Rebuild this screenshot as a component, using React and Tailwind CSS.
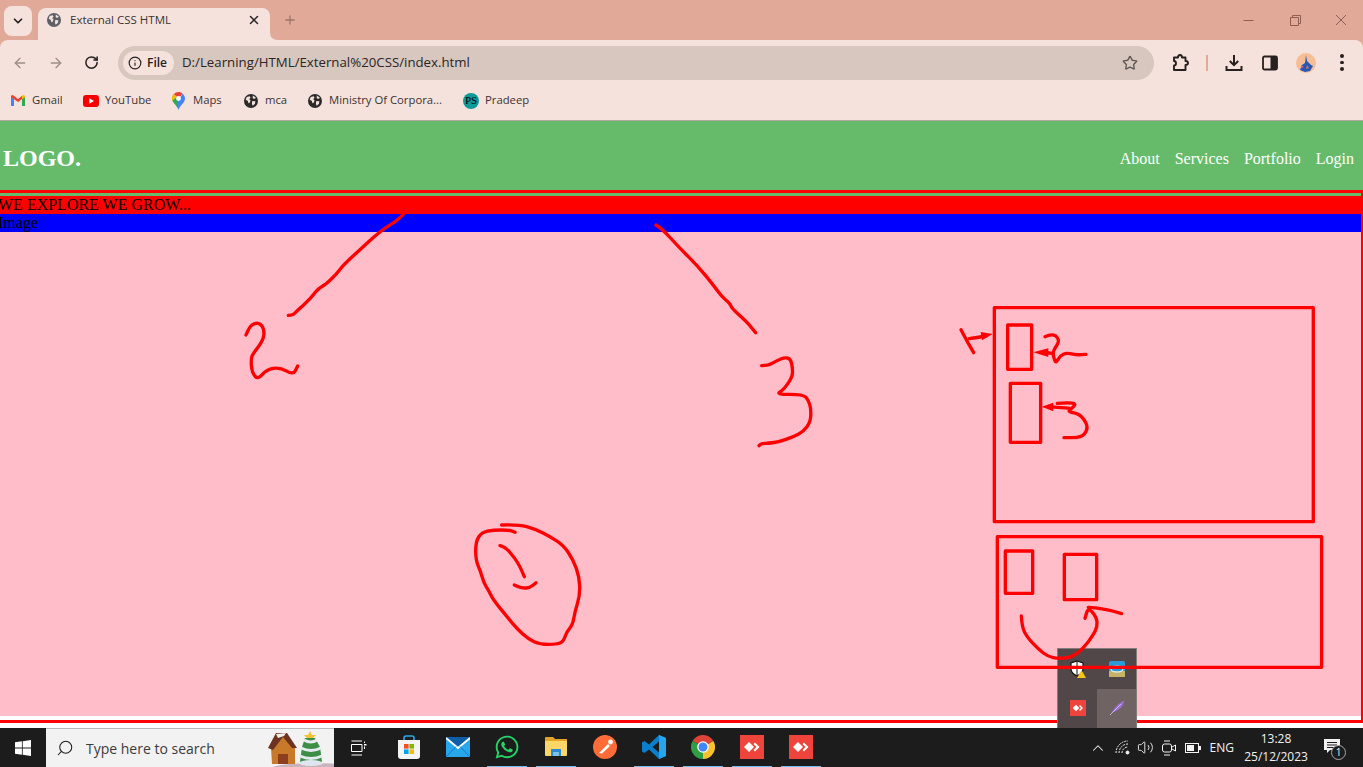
import React from 'react';
import { ArrowLeft, ArrowRight, ChevronDown, ChevronUp, Info, Plus, RotateCw, Search, Star, Volume2, X } from 'lucide-react';
import { FaWhatsapp } from 'react-icons/fa';

const uiFont = "font-['Open_Sans','Noto_Sans',sans-serif]";

const Globe = ({ size = 14, color = '#2b2b2b' }) => (
  <svg width={size} height={size} viewBox="0 0 16 16">
    <circle cx="8" cy="8" r="8" fill={color} />
    <path d="M3 3.5 L6.5 2.5 L7.5 4 L6 6 L7.5 7.5 L6.5 10 L5 10.5 L4.5 8 L2 6.5 Z M10 1.8 L13.5 4 L12.5 5.5 L10 5 Z M9.5 8 L13 8.2 L12.5 11 L10 13.5 L9 11 Z" fill="#f6e2dc" />
  </svg>
);

const GmailIcon = () => (
  <svg width="14" height="11" viewBox="0 0 14 11">
    <path d="M0 1.5 V11 H3 V4 Z" fill="#4285f4" />
    <path d="M14 1.5 V11 H11 V4 Z" fill="#34a853" />
    <path d="M0 1 Q1 -0.5 2.5 0.5 L7 4 L11.5 0.5 L11 4 L7 7 L0 2 Z" fill="#ea4335" />
    <path d="M11 1 L12 0.3 Q13.5 -0.4 14 1.5 V2 L11 4.2 Z" fill="#fbbc04" />
  </svg>
);

const YoutubeIcon = () => (
  <svg width="16" height="12" viewBox="0 0 16 12">
    <rect width="16" height="12" rx="3" fill="#f40000" />
    <path d="M6.3 3.2 L11 6 L6.3 8.8 Z" fill="#fff" />
  </svg>
);

const MapsIcon = () => (
  <svg width="13" height="18" viewBox="0 0 13 18">
    <path d="M6.5 18 C5 13 0 11 0 6.5 C0 4.6 0.8 3 2 2 L6.5 7 Z" fill="#34a853" />
    <path d="M0.4 8.5 C0 7.5 0 7 0 6.5 C0 4.6 0.8 3 2 2 L5 5 Z" fill="#fbbc04" />
    <path d="M2 2 C3 0.8 4.6 0 6.5 0 C8 0 9.6 0.6 10.6 1.7 L6.5 6.5 Z" fill="#ea4335" />
    <path d="M10.6 1.7 C12.2 3 13 4.8 13 6.5 C13 11 8 13 6.5 18 L5 11 Z" fill="#4285f4" />
    <circle cx="6.5" cy="6.5" r="2.4" fill="#fff" />
  </svg>
);

const PsAvatar = () => (
  <span className="flex h-4 w-4 items-center justify-center rounded-full bg-[#0f9a9a] font-['Liberation_Serif',serif] text-[11px] leading-none text-black">PS</span>
);

const bookmarks = [
  { label: 'Gmail', icon: <GmailIcon />, iconW: 'w-[14px]', ml: 'ml-[11px]', gap: 'gap-[7px]', textW: 'w-[33px]' },
  { label: 'YouTube', icon: <YoutubeIcon />, iconW: 'w-4', ml: 'ml-[18px]', gap: 'gap-[6px]', textW: 'w-[46px]' },
  { label: 'Maps', icon: <MapsIcon />, iconW: 'w-[13px]', ml: 'ml-[21px]', gap: 'gap-[8px]', textW: 'w-[30px]' },
  { label: 'mca', icon: <Globe />, iconW: 'w-[14px]', ml: 'ml-[21px]', gap: 'gap-[7px]', textW: 'w-[22px]' },
  { label: 'Ministry Of Corpora...', icon: <Globe />, iconW: 'w-[14px]', ml: 'ml-[21px]', gap: 'gap-[7px]', textW: 'w-[115px]' },
  { label: 'Pradeep', icon: <PsAvatar />, iconW: 'w-4', ml: 'ml-[19px]', gap: 'gap-[6px]', textW: 'w-[44px]' },
];

const TabStrip = () => (
  <div className="flex h-10 items-end bg-[#e1aa98]">
    <div className="mb-1 ml-1 flex h-[30px] w-7 items-center justify-center rounded-lg bg-[#f6e2dc]">
      <ChevronDown size={14} strokeWidth={3} color="#26201f" />
    </div>
    <div className="relative ml-[6px] flex h-8 w-[232px] items-center rounded-t-lg bg-[#f6e2dc] pb-2 pl-[9px] pr-[9px]">
      <svg className="absolute bottom-0 right-[-8px]" width="8" height="8" viewBox="0 0 8 8">
        <path d="M0 0 Q0 8 8 8 H0 Z" fill="#f6e2dc" />
      </svg>
      <Globe size={14} color="#5c5f66" />
      <span className="ml-[9px] flex-1 whitespace-nowrap text-[11.5px] text-[#3a3331]">External CSS HTML</span>
      <X size={14} strokeWidth={2.6} color="#2a2523" />
    </div>
    <div className="mb-[13px] ml-[13px]">
      <Plus size={14} strokeWidth={2.2} color="#9a7468" />
    </div>
    <div className="flex-1" />
    <div className="flex h-full items-center">
      <svg className="mr-[36px]" width="11" height="11" viewBox="0 0 11 11">
        <path d="M0.5 5.5 H10.5" stroke="#8f5f52" fill="none" />
      </svg>
      <svg className="mr-[34px]" width="11" height="11" viewBox="0 0 11 11">
        <path d="M0.5 2.5 H8.5 V10.5 H0.5 Z M2.5 2.5 V0.5 H10.5 V8.5 H8.5" stroke="#8f5f52" fill="none" />
      </svg>
      <svg className="mr-[16px]" width="12" height="12" viewBox="0 0 12 12">
        <path d="M1 1 L11 11 M11 1 L1 11" stroke="#8f5f52" fill="none" />
      </svg>
    </div>
  </div>
);

const Toolbar = () => (
  <div className="flex h-[45px] items-center rounded-t-lg bg-[#f6e2dc]">
    <div className="ml-3 flex w-[87px] items-center gap-[20px]">
      <ArrowLeft size={16} strokeWidth={2} color="#9c8e8a" />
      <ArrowRight size={16} strokeWidth={2} color="#9c8e8a" />
      <RotateCw size={15} strokeWidth={2.4} color="#26201f" />
    </div>
    <div className="ml-[19px] flex h-[34px] w-[1036px] items-center rounded-full bg-[#d7c7bf] pl-[5px]">
      <div className="flex h-6 w-[51px] items-center gap-[5px] rounded-full bg-[#f6e2dc] pl-[5px]">
        <Info size={14} strokeWidth={2} color="#26201f" />
        <span className="text-[12px] font-semibold text-[#26201f]">File</span>
      </div>
      <span className="ml-2 flex-1 whitespace-nowrap text-[13.25px] text-[#2b2523]">D:/Learning/HTML/External%20CSS/index.html</span>
      <Star size={16} strokeWidth={2} color="#5d5553" className="mr-[16px]" />
    </div>
    <svg className="ml-[17px]" width="18" height="18" viewBox="0 0 18 18">
      <path d="M3 3.5 H7 Q7 1 9 1 Q11 1 11 3.5 H14.5 V7 Q17 7 17 9 Q17 11 14.5 11 V16 H3 V11.5 Q5 11.5 5 9.5 Q5 7 3 7 Z" fill="none" stroke="#26201f" strokeWidth="1.9" strokeLinejoin="round" />
    </svg>
    <div className="ml-[17px] h-4 w-[2px] bg-[#e1aa98]" />
    <svg className="ml-[17px]" width="18" height="18" viewBox="0 0 18 18">
      <path d="M9 1 V11 M4.8 7 L9 11.2 L13.2 7 M1.5 12 V16 H16.5 V12" fill="none" stroke="#26201f" strokeWidth="2" />
    </svg>
    <svg className="ml-[19px]" width="16" height="16" viewBox="0 0 16 16">
      <rect x="1" y="1.5" width="14" height="13" rx="1.5" fill="#f6e2dc" stroke="#26201f" strokeWidth="1.8" />
      <rect x="8.5" y="1.5" width="6.5" height="13" fill="#26201f" />
    </svg>
    <svg className="ml-[18px]" width="20" height="20" viewBox="0 0 20 20">
      <circle cx="10" cy="10" r="10" fill="#f7bd94" />
      <path d="M10 2 L11 8 L15 12 L17 13 L14 18 L9 19 L4 17 L6 12 L9 10 Z" fill="#2357b8" />
      <path d="M5 12 L8 14 L5 15 Z M11 12 L13 15 L10 16 Z" fill="#e96a6a" />
    </svg>
    <div className="ml-[24px] flex w-1 flex-col gap-[3px]">
      <span className="h-[3.5px] w-[3.5px] rounded-full bg-[#26201f]" />
      <span className="h-[3.5px] w-[3.5px] rounded-full bg-[#26201f]" />
      <span className="h-[3.5px] w-[3.5px] rounded-full bg-[#26201f]" />
    </div>
  </div>
);

const BookmarksBar = () => (
  <div className="flex h-9 items-center border-b border-[#b3a7a3] bg-[#f6e2dc] pb-1">
    {bookmarks.map((b) => (
      <div key={b.label} className={`flex items-center ${b.ml} ${b.gap}`}>
        <span className={`flex items-center justify-center ${b.iconW}`}>{b.icon}</span>
        <span className={`whitespace-nowrap text-[11.3px] text-[#3a3331] ${b.textW}`}>{b.label}</span>
      </div>
    ))}
  </div>
);

const SiteHeader = () => (
  <header className="flex h-[69px] items-center justify-between bg-[#66bb6a] pl-[3px] pr-[9px] pt-1 font-['Liberation_Serif',serif] text-white">
    <div className="text-2xl font-bold leading-none">LOGO.</div>
    <nav className="mt-[2px] flex gap-[15px] text-base">
      <a>About</a>
      <a>Services</a>
      <a>Portfolio</a>
      <a>Login</a>
    </nav>
  </header>
);

const Hero = () => (
  <section className="flex h-[533px] flex-col border-y-[3px] border-r-[2px] border-[#ff0000] font-['Liberation_Serif',serif] text-base text-black">
    <div className="h-[3px] bg-[#66bb6a]" />
    <div className="h-[18px] whitespace-nowrap bg-[#ff0000] indent-[-2px] leading-[18px]">WE EXPLORE WE GROW...</div>
    <div className="h-[18px] bg-[#0000ff] indent-[-2px] leading-[18px]">Image</div>
    <div className="flex-1 bg-[#ffbcc9]" />
    <div className="h-1 bg-white" />
  </section>
);

// rounds the corners of a stroke through the midpoints of its points
const smooth = (p) => {
  const pts = p.split(' ').map((s) => s.split(',').map(Number));
  let d = `M${pts[0][0]} ${pts[0][1]}`;
  for (let i = 1; i < pts.length - 1; i++) {
    const mx = (pts[i][0] + pts[i + 1][0]) / 2;
    const my = (pts[i][1] + pts[i + 1][1]) / 2;
    d += ` Q${pts[i][0]} ${pts[i][1]} ${mx} ${my}`;
  }
  const last = pts[pts.length - 1];
  return `${d} L${last[0]} ${last[1]}`;
};

// marker strokes, coordinates read off the 3x crops so each group keeps its crop origin
const Line = ({ p }) => <path d={smooth(p)} fill="none" stroke="#ff0000" strokeWidth="10" strokeLinejoin="round" strokeLinecap="round" />;
const Box = ({ x, y, w, h }) => <rect x={x} y={y} width={w} height={h} fill="none" stroke="#ff0000" strokeWidth="10" strokeLinejoin="round" />;

const Scribbles = () => (
  <svg className="pointer-events-none absolute left-0 top-0 z-20" width="1363" height="767" viewBox="0 0 1363 767">
    <g transform="translate(230 205) scale(0.3333)">
      <Line p="520,28 500,48 470,65 430,97 400,125 340,180 320,207 285,240 265,250 240,283 200,318 190,330 175,331" />
      <Line p="48,390 58,365 75,354 92,356 103,375 100,405 70,445 63,460 65,500 83,525 110,493 150,487 190,510 203,483" />
    </g>
    <g transform="translate(640 215) scale(0.3333)">
      <Line p="48,30 65,40 115,95 175,155 220,210 245,245 270,265 275,280 320,320 340,345 347,353" />
      <Line p="365,452 385,452 410,437 435,427 452,432 458,460 457,487 430,525 408,538 490,538 505,555 513,580 512,620 490,650 460,665 420,680 385,685 365,685 357,692" />
    </g>
    <g transform="translate(460 515) scale(0.3333)">
      <Line p="125,30 175,28 225,42 270,65 310,90 340,135 358,185 360,240 345,290 338,330 320,350 310,380 290,388 240,388 205,372 170,340 145,310 100,255 85,225 72,205 62,170 47,135 47,80 65,52 100,45 150,45 165,52" />
      <Line p="120,92 135,95 165,130 180,155 193,185" />
      <Line p="163,210 185,220 210,218 228,203" />
    </g>
    <g transform="translate(950 295) scale(0.3333)">
      <Box x="133" y="38" w="957" h="642" />
      <Box x="173" y="90" w="72" h="133" />
      <Box x="181" y="265" w="91" h="177" />
      <Line p="33,104 52,140 71,173" />
      <Line p="58,131 85,127 110,122" />
      <polygon points="128,117 92,111 96,136" fill="#ff0000" />
      <Line p="285,125 300,118 318,122 327,135 322,150 308,170 312,190 318,205 330,182 350,173 380,180 408,178" />
      <Line p="305,175 290,173 270,172" />
      <polygon points="250,172 295,160 295,186" fill="#ff0000" />
      <Line p="322,325 385,320 360,345 355,350 390,358 410,385 412,405 395,428 342,428" />
      <Line p="360,340 330,338 295,335" />
      <polygon points="275,335 310,323 310,349" fill="#ff0000" />
    </g>
    <g transform="translate(990 530) scale(0.3333)">
      <Box x="22" y="20" w="973" h="392" />
      <Box x="46" y="63" w="82" h="127" />
      <Box x="223" y="73" w="97" h="136" />
      <Line p="94,258 96,290 110,320 145,358 175,380 205,386 245,382 280,355 310,315 322,290 320,262 295,232 285,265" />
      <Line p="295,232 340,235 395,251" />
    </g>
  </svg>
);

const AnyDesk = ({ size = 24 }) => (
  <svg width={size} height={size} viewBox="0 0 24 24">
    <rect width="24" height="24" fill="#ef443b" />
    <path d="M9 7 L14 12 L9 17 L4 12 Z" fill="#fff" />
    <path d="M15 7.5 L19.5 12 L15 16.5 L13.5 15 L16.5 12 L13.5 9 Z" fill="#fff" />
  </svg>
);

const TrayPopup = () => (
  <div className="absolute left-[1057px] top-[648px] z-10 grid h-[80px] w-[80px] grid-cols-2 grid-rows-2 border border-b-0 border-[#857b7b] bg-[#524748]">
    <div className="flex items-center justify-center">
      <svg width="16" height="18" viewBox="0 0 16 18">
        <path d="M7 1 L13 3 V9 Q13 13 7 16 Q1 13 1 9 V3 Z" fill="#fff" stroke="#111" strokeWidth="1.2" />
        <path d="M7 1 V16 M1 8 H13" stroke="#111" strokeWidth="1" />
        <path d="M11.5 10 L16 18 H7 Z" fill="#f5c518" />
      </svg>
    </div>
    <div className="flex items-center justify-center">
      <svg width="16" height="16" viewBox="0 0 16 16">
        <rect width="16" height="16" rx="2" fill="#2a9bd8" />
        <rect y="10" width="16" height="6" fill="#c7b267" />
        <ellipse cx="8" cy="8" rx="6" ry="3" fill="none" stroke="#dff2fb" strokeWidth="1.2" />
      </svg>
    </div>
    <div className="flex items-center justify-center">
      <AnyDesk size={16} />
    </div>
    <div className="flex items-center justify-center bg-[#6f6364]">
      <svg width="16" height="16" viewBox="0 0 16 16">
        <path d="M0.5 15.5 L5 9 Q9 3 15.5 0.5 Q14 7 9 10 Q5 12 2.5 12.5 Z" fill="#9a6fd6" />
        <path d="M1 15 L12 4" stroke="#e2d5f5" strokeWidth="0.7" />
      </svg>
    </div>
  </div>
);

const WindowsLogo = () => (
  <svg width="16" height="16" viewBox="0 0 16 16" fill="#fff">
    <path d="M0 2.3 L6.9 1.3 V7.6 H0 Z M7.7 1.2 L16 0 V7.6 H7.7 Z M0 8.4 H6.9 V14.7 L0 13.7 Z M7.7 8.4 H16 V16 L7.7 14.8 Z" />
  </svg>
);

const TaskView = () => (
  <svg width="16" height="16" viewBox="0 0 16 16" fill="none" stroke="#fff" strokeWidth="1">
    <path d="M0.5 1 H11 M0.5 15 H11 M0.5 4.5 H11 V11.5 H0.5 Z M13.5 1.5 V3 M13.5 6.5 V9" />
    <rect x="13" y="4" width="2.5" height="1.5" fill="#fff" stroke="none" />
  </svg>
);

const StoreIcon = () => (
  <svg width="24" height="24" viewBox="0 0 24 24">
    <path d="M7 6 V3 Q7 1 9 1 H15 Q17 1 17 3 V6" fill="none" stroke="#28a8ea" strokeWidth="1.6" />
    <path d="M1 5 H23 V21 Q23 24 20 24 H4 Q1 24 1 21 Z" fill="#f4f4f4" />
    <rect x="7" y="9" width="4.6" height="4.6" fill="#f25022" />
    <rect x="12.4" y="9" width="4.6" height="4.6" fill="#7fba00" />
    <rect x="7" y="14.4" width="4.6" height="4.6" fill="#00a4ef" />
    <rect x="12.4" y="14.4" width="4.6" height="4.6" fill="#ffb900" />
  </svg>
);

const MailIcon = () => (
  <svg width="24" height="20" viewBox="0 0 24 20">
    <path d="M0 0 H24 V20 H0 Z" fill="#28a8ea" />
    <path d="M0 0 H24 L12 10 Z" fill="#0f5fa8" />
    <path d="M0 1 L12 11 L24 1" fill="none" stroke="#fff" strokeWidth="1.8" />
    <path d="M0 20 L10 9.5 M24 20 L14 9.5" stroke="#0f78d4" strokeWidth="1" />
  </svg>
);

const ExplorerIcon = () => (
  <svg width="22" height="20" viewBox="0 0 22 20">
    <path d="M0 1 Q0 0 1 0 H8 L10 2 H22 V5 H0 Z" fill="#e0a526" />
    <path d="M0 4 H22 V18 Q22 19 21 19 H1 Q0 19 0 18 Z" fill="#fcd667" />
    <path d="M6 12 H16 V19 H13.5 V15 H8.5 V19 H6 Z" fill="#2b8ad6" />
    <rect x="8.5" y="15" width="5" height="4" fill="#79c3ef" />
  </svg>
);

const PostmanIcon = () => (
  <svg width="24" height="24" viewBox="0 0 24 24">
    <circle cx="12" cy="12" r="12" fill="#ff6c37" />
    <path d="M6 18 L15 9 L17 11 L9 18.5 Z" fill="#fff" />
    <circle cx="17.5" cy="7" r="2.4" fill="#fff" />
  </svg>
);

const VsCodeIcon = () => (
  <svg width="24" height="24" viewBox="0 0 24 24">
    <path d="M17 0 L24 3 V21 L17 24 L7 14.5 L2.5 18 L0 16.5 V7.5 L2.5 6 L7 9.5 Z M17 6.5 L10.5 12 L17 17.5 Z" fill="#0a7fcc" />
    <path d="M17 0 L24 3 V21 L17 24 Z" fill="#27a4ee" />
  </svg>
);

const ChromeIcon = () => (
  <svg width="24" height="24" viewBox="0 0 24 24">
    <path d="M12 12 L1.6 6 A12 12 0 0 1 22.4 6 Z" fill="#db4437" />
    <path d="M12 12 L22.4 6 A12 12 0 0 1 12 24 Z" fill="#fbc02d" />
    <path d="M12 12 L12 24 A12 12 0 0 1 1.6 6 Z" fill="#2f9e44" />
    <circle cx="12" cy="12" r="5.8" fill="#fff" />
    <circle cx="12" cy="12" r="4.5" fill="#4285f4" />
  </svg>
);

const HouseAndTree = () => (
  <svg className="absolute bottom-0 right-0" width="80" height="39" viewBox="0 0 80 39">
    <ellipse cx="60" cy="41" rx="44" ry="6" fill="#c9b3bc" />
    <path d="M17 20 L29 6 L41 20 V36 H18 Z" fill="#c87a2a" />
    <path d="M14 20 L22 5 H33 L43 20 H38 L29 9 L19 22 Z" fill="#6b3320" />
    <path d="M22 6 L32 5 L30 8 L24 10 Z" fill="#f2eee9" />
    <rect x="24" y="26" width="10" height="10" fill="#8c3f1f" />
    <path d="M51 10 L61 10 L66 19 L68 34 L46 34 L48 19 Z" fill="#3d8f46" />
    <path d="M47 20 Q57 25 67 20 M46 28 Q57 33 68 28 M50 12 Q57 16 63 12" stroke="#e6ebf2" strokeWidth="3" fill="none" />
    <path d="M56 3 L58 7 L62 7 L59 10 H53 L50 7 L54 7 Z" fill="#f1c232" />
    <ellipse cx="57" cy="35" rx="12" ry="3" fill="#dfe6ee" />
  </svg>
);

const taskApps = [
  { id: 'store', icon: <StoreIcon /> },
  { id: 'mail', icon: <MailIcon /> },
  { id: 'whatsapp', icon: <FaWhatsapp size={26} color="#25d366" />, on: true },
  { id: 'explorer', icon: <ExplorerIcon />, on: true },
  { id: 'postman', icon: <PostmanIcon /> },
  { id: 'vscode', icon: <VsCodeIcon />, on: true },
  { id: 'chrome', icon: <ChromeIcon />, on: true },
  { id: 'anydesk1', icon: <AnyDesk />, on: true },
  { id: 'anydesk2', icon: <AnyDesk />, on: true },
];

const Taskbar = () => (
  <div className="flex h-[39px] items-stretch bg-[#1c1c1c]">
    <div className="flex w-[46px] items-center justify-center">
      <WindowsLogo />
    </div>
    <div className="relative flex w-[288px] items-center border-t border-[#b8b8b8] bg-[#f2f2f2] pl-[10px]">
      <Search size={18} strokeWidth={1.4} color="#1c1c1c" className="-scale-x-100" />
      <span className="ml-3 whitespace-nowrap text-[14px] text-[#3b3b3b]">Type here to search</span>
      <HouseAndTree />
    </div>
    <div className="flex w-[50px] items-center justify-center">
      <TaskView />
    </div>
    {taskApps.map((app) => (
      <div key={app.id} className="flex w-[49px] flex-col items-center">
        <div className="flex flex-1 items-center justify-center">{app.icon}</div>
        <div className={app.on ? 'h-px w-10 bg-[#76b9ed]' : 'h-px w-10'} />
      </div>
    ))}
    <div className="flex-1" />
    <div className="flex items-center text-[#f2f2f2]">
      <ChevronUp size={18} strokeWidth={1.4} />
      <svg className="ml-[8px]" width="15" height="15" viewBox="0 0 15 15" fill="none" stroke="#f2f2f2" strokeWidth="1">
        <path d="M1 13 A12 12 0 0 1 13 1 M4 13 A9 9 0 0 1 13 4 M7 13 A6 6 0 0 1 13 7" strokeDasharray="2 1" />
        <circle cx="12.5" cy="12.5" r="1.5" fill="#f2f2f2" />
      </svg>
      <Volume2 size={17} strokeWidth={1.3} className="ml-[7px]" />
      <svg className="ml-[8px]" width="14" height="18" viewBox="0 0 14 18" fill="none" stroke="#f2f2f2" strokeWidth="1">
        <rect x="0.5" y="5" width="9" height="8" rx="2" />
        <path d="M10 8 L13.5 6 V12 L10 10 M2 2 H8 M2 16 H8" />
      </svg>
      <svg className="ml-[9px]" width="16" height="10" viewBox="0 0 16 10">
        <rect x="0.5" y="0.5" width="13" height="9" fill="none" stroke="#f2f2f2" />
        <rect x="2" y="2" width="7" height="6" fill="#f2f2f2" />
        <rect x="14" y="3" width="2" height="4" fill="#f2f2f2" />
      </svg>
      <span className="ml-[9px] text-[12px]">ENG</span>
      <div className="ml-[11px] flex w-[62px] flex-col items-center text-[12px] leading-[18px]">
        <span>13:28</span>
        <span>25/12/2023</span>
      </div>
      <div className="relative ml-[17px] mr-[22px] h-5 w-[17px]">
        <svg className="absolute left-0 top-[1px]" width="16" height="15" viewBox="0 0 16 15">
          <path d="M0 0 H16 V11 H6 L3 14 V11 H0 Z" fill="#f2f2f2" />
          <path d="M3 3.5 H13 M3 6 H13 M3 8.5 H10" stroke="#1c1c1c" />
        </svg>
        <span className="absolute left-[7px] top-[7px] flex h-[15px] w-[15px] items-center justify-center rounded-full border border-[#a8a8a8] bg-[#1c1c1c] text-[10px] leading-none">1</span>
      </div>
    </div>
  </div>
);

export default function App() {
  return (
    <div className={`relative flex h-[767px] w-[1363px] flex-col overflow-hidden bg-white ${uiFont}`}>
      <TabStrip />
      <div className="bg-[#e1aa98]">
        <Toolbar />
      </div>
      <BookmarksBar />
      <SiteHeader />
      <Hero />
      <div className="h-[5px] bg-white" />
      <Taskbar />
      <TrayPopup />
      <Scribbles />
    </div>
  );
}
